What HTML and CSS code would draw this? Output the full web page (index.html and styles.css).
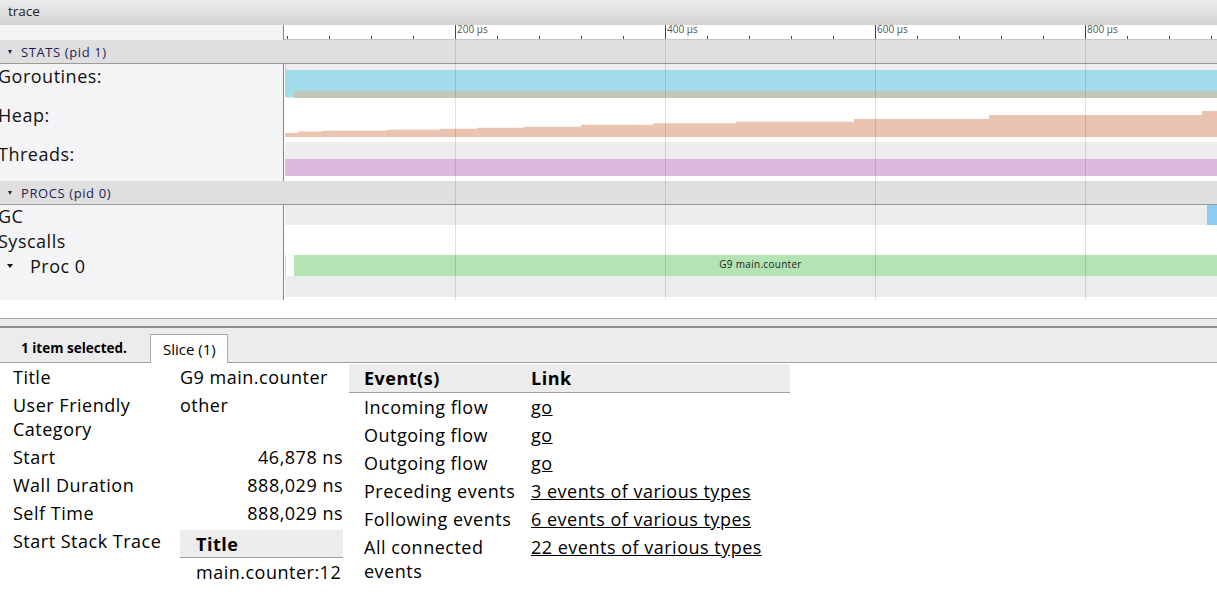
FILE: index.html
```html
<!DOCTYPE html>
<html>
<head>
<meta charset="utf-8">
<title>trace</title>
<link rel="stylesheet" href="styles.css">
</head>
<body>
<div class="titlebar">trace</div>

<div class="timeline">
  <div class="row ruler-row">
    <div class="label-cell"></div>
    <div class="track ruler-track">
      <svg class="ruler" width="933" height="15" viewBox="0 0 933 15">
        <rect x="0" y="14" width="933" height="1" fill="#c6c6c6"/>
        <g fill="#444">
          <rect x="3" y="11" width="1" height="3"/>
          <rect x="45" y="11" width="1" height="3"/>
          <rect x="87" y="11" width="1" height="3"/>
          <rect x="129" y="11" width="1" height="3"/>
          <rect x="171" y="0" width="1" height="14"/>
          <rect x="213" y="11" width="1" height="3"/>
          <rect x="255" y="11" width="1" height="3"/>
          <rect x="297" y="11" width="1" height="3"/>
          <rect x="339" y="11" width="1" height="3"/>
          <rect x="381" y="0" width="1" height="14"/>
          <rect x="423" y="11" width="1" height="3"/>
          <rect x="465" y="11" width="1" height="3"/>
          <rect x="507" y="11" width="1" height="3"/>
          <rect x="549" y="11" width="1" height="3"/>
          <rect x="591" y="0" width="1" height="14"/>
          <rect x="633" y="11" width="1" height="3"/>
          <rect x="675" y="11" width="1" height="3"/>
          <rect x="717" y="11" width="1" height="3"/>
          <rect x="759" y="11" width="1" height="3"/>
          <rect x="801" y="0" width="1" height="14"/>
          <rect x="843" y="11" width="1" height="3"/>
          <rect x="885" y="11" width="1" height="3"/>
          <rect x="927" y="11" width="1" height="3"/>
        </g>
      </svg>
      <span class="tick-label" style="left:173px">200 µs</span>
      <span class="tick-label" style="left:383px">400 µs</span>
      <span class="tick-label" style="left:593px">600 µs</span>
      <span class="tick-label" style="left:803px">800 µs</span>
    </div>
  </div>

  <div class="group-header"><span class="tri"></span><span>STATS (pid 1)</span></div>

  <div class="row counter-row">
    <div class="label-cell"><span class="label">Goroutines:</span></div>
    <div class="track">
      <svg width="933" height="39" viewBox="0 0 933 39">
        <rect x="1" y="0" width="932" height="34" fill="#ededed"/>
        <rect x="1" y="6" width="932" height="21" fill="#a1dbec"/>
        <rect x="10" y="27" width="923" height="7" fill="#c2c8ba"/>
        <rect x="1" y="27" width="9" height="6" fill="#a1dbec"/>
        <rect x="1" y="0" width="1" height="6" fill="#a1dbec"/>
      </svg>
    </div>
  </div>

  <div class="row counter-row">
    <div class="label-cell"><span class="label">Heap:</span></div>
    <div class="track">
      <svg width="933" height="39" viewBox="0 0 933 39">
        <path fill="#eac4b1" d="M1 34 V30 H14 V28.5 H38 V27.7 H103 V26.7 H156 V25.7 H193 V24.7 H240 V23.7 H297 V21.7 H369 V20.3 H452 V18.7 H570 V16 H705 V12 H918 V8 H933 V34 Z"/>
      </svg>
    </div>
  </div>

  <div class="row counter-row">
    <div class="label-cell"><span class="label">Threads:</span></div>
    <div class="track">
      <svg width="933" height="39" viewBox="0 0 933 39">
        <rect x="1" y="0" width="932" height="34" fill="#ededed"/>
        <rect x="1" y="17" width="932" height="17" fill="#dbb8dc"/>
      </svg>
    </div>
  </div>

  <div class="group-header"><span class="tri"></span><span>PROCS (pid 0)</span></div>

  <div class="row gc-row">
    <div class="label-cell"><span class="label gc-label">GC</span></div>
    <div class="track">
      <div class="lane lane-gray gc-lane"><div class="gc-event"></div></div>
    </div>
  </div>

  <div class="row sys-row">
    <div class="label-cell"><span class="label sys-label">Syscalls</span></div>
    <div class="track"></div>
  </div>

  <div class="row proc-row">
    <div class="label-cell"><span class="proc-label"><span class="tri dark"></span><span>Proc 0</span></span></div>
    <div class="track">
      <div class="slice-lane">
        <div class="slice-tiny"></div>
        <div class="slice">G9 main.counter</div>
      </div>
      <div class="lane lane-gray proc-lane"></div>
    </div>
  </div>

  <div class="gridlines"></div>
</div>

<div class="spacer"></div>
<div class="splitter"></div>

<div class="tabbar">
  <div class="selected-count">1 item selected.</div>
  <div class="tab">Slice (1)</div>
</div>

<div class="details">
  <table class="props">
    <tr><td class="k">Title</td><td class="v">G9 main.counter</td></tr>
    <tr><td class="k">User Friendly Category</td><td class="v">other</td></tr>
    <tr><td class="k">Start</td><td class="v num">46,878 ns</td></tr>
    <tr><td class="k">Wall Duration</td><td class="v num">888,029 ns</td></tr>
    <tr><td class="k">Self Time</td><td class="v num">888,029 ns</td></tr>
    <tr><td class="k">Start Stack Trace</td>
      <td class="v">
        <table class="stack">
          <thead><tr><th>Title</th></tr></thead>
          <tbody><tr><td>main.counter:12</td></tr></tbody>
        </table>
      </td>
    </tr>
  </table>

  <table class="events">
    <thead><tr><th class="c1">Event(s)</th><th>Link</th></tr></thead>
    <tbody>
      <tr><td>Incoming flow</td><td><a href="#">go</a></td></tr>
      <tr><td>Outgoing flow</td><td><a href="#">go</a></td></tr>
      <tr><td>Outgoing flow</td><td><a href="#">go</a></td></tr>
      <tr><td>Preceding events</td><td><a href="#">3 events of various types</a></td></tr>
      <tr><td>Following events</td><td><a href="#">6 events of various types</a></td></tr>
      <tr><td>All connected events</td><td><a href="#">22 events of various types</a></td></tr>
    </tbody>
  </table>
</div>
</body>
</html>
```

FILE: styles.css
```css
* { box-sizing: border-box; }
html, body { margin: 0; padding: 0; }
body {
  width: 1217px;
  height: 614px;
  overflow: hidden;
  background: #fff;
  color: #000;
  font-family: "Open Sans", "Noto Sans", sans-serif;
}

.titlebar {
  height: 25px;
  background: linear-gradient(#ececec, #d3d3d3);
  font-size: 13.5px;
  line-height: 23px;
  padding-left: 8px;
  color: #222;
}

.timeline {
  position: relative;
  height: 275px;
}
.row { display: flex; }
.label-cell {
  width: 284px;
  flex: none;
  background: #f4f4f6;
  border-right: 1px solid #858585;
  font-size: 18px;
  letter-spacing: 0.5px;
  line-height: 24px;
  white-space: nowrap;
  color: #111;
}
.label { display: block; margin-left: -2px; }
.track { flex: 1; min-width: 0; overflow: hidden; }
.track svg { display: block; }

.ruler-row { height: 15px; }
.ruler-track { position: relative; overflow: visible; }
.tick-label {
  position: absolute;
  top: 0;
  font-size: 10px;
  line-height: 9px;
  color: #555;
  white-space: nowrap;
}

.group-header {
  height: 24px;
  background: #dfdfdf;
  border-bottom: 1px solid #9a9a9a;
  display: flex;
  align-items: center;
  gap: 9px;
  padding-left: 8px;
  font-size: 13px;
  letter-spacing: 0.6px;
  color: #1e1e58;
}
.tri {
  display: inline-block;
  width: 0;
  height: 0;
  border-left: 2.5px solid transparent;
  border-right: 2.5px solid transparent;
  border-top: 4px solid #1e1e58;
}
.tri.dark { border-top-color: #111; border-left-width: 3px; border-right-width: 3px; }

.counter-row { height: 39px; }
.gc-row { height: 20px; }
.gc-row .label-cell { position: relative; z-index: 1; }
.gc-label { margin-top: -1px; }
.sys-row { height: 30px; }
.sys-label { padding-top: 4px; }
.proc-row { height: 45px; }

.lane { height: 100%; }
.lane-gray { background: #ededed; margin-left: 1px; }
.gc-lane { display: flex; justify-content: flex-end; }
.gc-event { width: 10px; background: #8ccbf4; }

.slice-lane {
  height: 21px;
  display: flex;
  padding-left: 1px;
  gap: 8px;
}
.slice-tiny { width: 1px; background: #b4e3b4; }
.slice {
  flex: 1;
  background: #b4e3b4;
  font-size: 10px;
  letter-spacing: 0.3px;
  line-height: 18px;
  text-align: center;
  padding-left: 10px;
  color: #222;
}
.proc-lane { height: 21px; }
.proc-label {
  display: flex;
  align-items: center;
  gap: 17px;
  padding-left: 7px;
  margin-top: -1px;
}

.gridlines {
  position: absolute;
  left: 284px;
  right: 0;
  top: 15px;
  bottom: 0;
  pointer-events: none;
  background: repeating-linear-gradient(to right,
    transparent 0, transparent 171px,
    rgba(0,0,0,0.12) 171px, rgba(0,0,0,0.12) 172px,
    transparent 172px, transparent 210px);
}

.spacer { height: 18px; }
.splitter {
  height: 10px;
  background: #ebebeb;
  border-top: 1px solid #a8a8a8;
  border-bottom: 2px solid #8c8c8c;
}

.tabbar {
  height: 35px;
  background: #ececec;
  border-bottom: 1px solid #a0a0a0;
  display: flex;
  align-items: flex-end;
  padding-left: 21px;
}
.selected-count {
  font-weight: bold;
  font-size: 13.5px;
  line-height: 28px;
}
.tab {
  margin-left: 23px;
  margin-bottom: -1px;
  height: 29px;
  padding: 0 11px 0 12px;
  background: #fff;
  border: 1px solid #a9a9a9;
  border-bottom: none;
  font-size: 15px;
  line-height: 28px;
}

.details {
  display: flex;
  align-items: flex-start;
  padding-left: 13px;
  font-size: 18px;
  letter-spacing: 0.5px;
  line-height: 24px;
}
table { border-collapse: collapse; border-spacing: 0; }
.props { table-layout: fixed; width: 330px; }
.props td { padding: 2px 0; vertical-align: top; }
.props td.k { width: 167px; }
.props td.num { text-align: right; }

.stack { width: 100%; margin-top: 1px; }
.stack th {
  text-align: left;
  font-weight: bold;
  background: #ececec;
  border-bottom: 1px solid #a0a0a0;
  padding: 2px 0 1px 16px;
}
.stack td { padding: 2px 0 2px 16px; }

.events {
  margin-left: 6px;
  margin-top: 1px;
  width: 441px;
  table-layout: fixed;
}
.events th {
  text-align: left;
  font-weight: bold;
  background: #ececec;
  border-bottom: 1px solid #a0a0a0;
  padding: 2px 0 2px 15px;
}
.events th.c1 { width: 167px; }
.events td { padding: 2px 0 2px 15px; vertical-align: top; }
.events a { color: #000; text-decoration: underline; }
```
